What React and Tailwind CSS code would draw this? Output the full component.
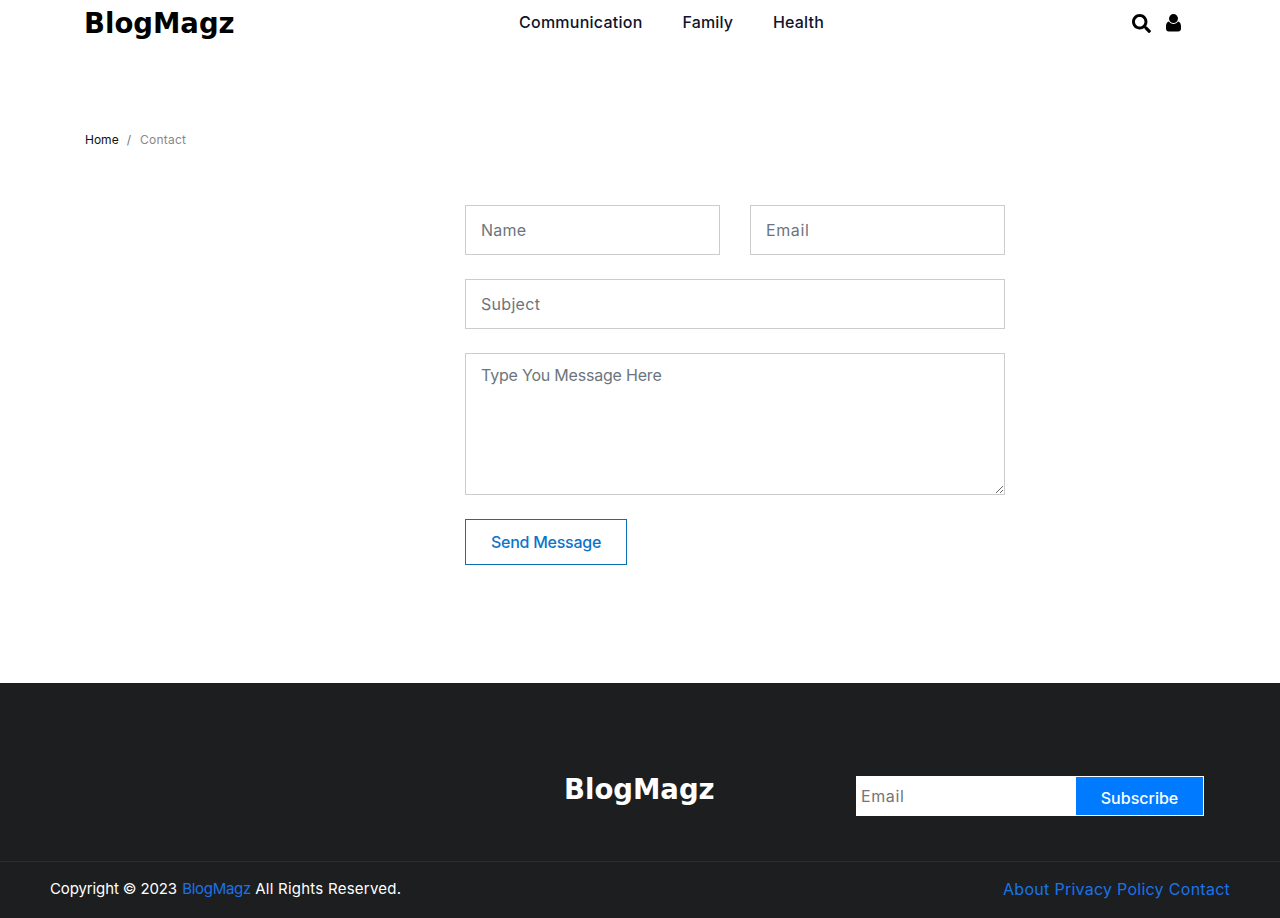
import React from "react";
import { FaSearch } from "react-icons/fa";

const inputCls = "h-[50px] border border-[#cccccc] bg-white px-[15px] text-[16px] text-[#495057] placeholder:text-[#6c757d] outline-none";

function UserIcon() {
  return (
    <svg width="15" height="18" viewBox="0 0 15 18" fill="currentColor">
      <circle cx="7.5" cy="4.6" r="4.5" />
      <path d="M3 7.6C4 9.2 5.6 10 7.5 10S11 9.2 12 7.6C13.9 8 15 9.6 15 12.4V14.6C15 16.4 13.8 17.6 12.2 17.6H2.8C1.2 17.6 0 16.4 0 14.6V12.4C0 9.6 1.1 8 3 7.6Z" />
    </svg>
  );
}

export default function App() {
  return (
    <div className="min-h-[918px] bg-white font-['Inter','Noto_Sans',sans-serif] text-[#212529] flex flex-col">
      <header className="h-[46px] px-[85px] flex items-center">
        <div className="w-[434px] -ml-px translate-y-px font-['DejaVu_Sans',sans-serif] font-bold text-[27.5px] leading-none text-black">BlogMagz</div>
        <nav className="ml-px flex gap-[40px] text-[16px] font-medium text-[#10132b] -translate-y-px">
          <a className="tracking-[0.25px]">Communication</a>
          <a className="tracking-[0.1px]">Family</a>
          <a className="tracking-[0.2px]">Health</a>
        </nav>
        <div className="ml-auto mr-[14px] flex items-center gap-[15px] text-black">
          <FaSearch className="text-[19px]" />
          <UserIcon />
        </div>
      </header>

      <div className="mt-[87px] px-[85px] flex items-center gap-[8px] text-[12px] leading-[14px]">
        <span className="text-[#111]">Home</span>
        <span className="text-[#6c757d]">/</span>
        <span className="text-[#888] tracking-[0.25px] ml-px">Contact</span>
      </div>

      <main className="mt-[58px] ml-[465px] w-[540px] flex flex-col gap-[24px]">
        <div className="flex gap-[30px]">
          <input className={`${inputCls} w-[255px] tracking-[0.25px]`} placeholder="Name" />
          <input className={`${inputCls} w-[255px] tracking-[0.6px]`} placeholder="Email" />
        </div>
        <input className={`${inputCls} w-full tracking-[0.3px]`} placeholder="Subject" />
        <textarea className="block h-[142px] w-full border border-[#cccccc] bg-white px-[15px] pt-[9px] text-[16px] leading-[24px] tracking-[-0.2px] text-[#495057] placeholder:text-[#6c757d] outline-none" placeholder="Type You Message Here" />
        <button className="h-[46px] w-[162px] border border-[#0b6fb5] bg-white text-[16px] font-medium tracking-[-0.25px] text-[#0b75c9]">Send Message</button>
      </main>

      <footer className="mt-[118px] h-[235px] bg-[#1c1e20] flex flex-col">
        <div className="h-[179px] border-b border-[#2b2d30] flex items-start">
          <div className="ml-[564px] mt-[91px] w-[292px] font-['DejaVu_Sans',sans-serif] font-bold text-[27.5px] leading-[30px] text-white">BlogMagz</div>
          <div className="mt-[93px] flex h-[40px] w-[348px]">
            <input className="h-full w-[220px] bg-white px-[5px] text-[16px] tracking-[0.6px] placeholder:text-[#757575] outline-none" placeholder="Email" />
            <button className="h-full w-[128px] border border-l-0 border-white bg-[#007bff] pt-[4px] text-[16px] font-medium text-white">Subscribe</button>
          </div>
        </div>
        <div className="flex-1 flex items-center justify-between px-[50px] text-[15px] text-white">
          <p className="-translate-y-px"><span className="tracking-[-0.12px]">Copyright © 2023</span> <a className="text-[#1a73e8] tracking-[-0.3px] ml-px">BlogMagz</a> <span className="tracking-[0.25px]">All Rights Reserved.</span></p>
          <div className="flex gap-[5px] text-[16px] tracking-[0.25px] text-[#1a73e8] -translate-y-px">
            <a>About</a><a>Privacy Policy</a><a>Contact</a>
          </div>
        </div>
      </footer>
    </div>
  );
}
